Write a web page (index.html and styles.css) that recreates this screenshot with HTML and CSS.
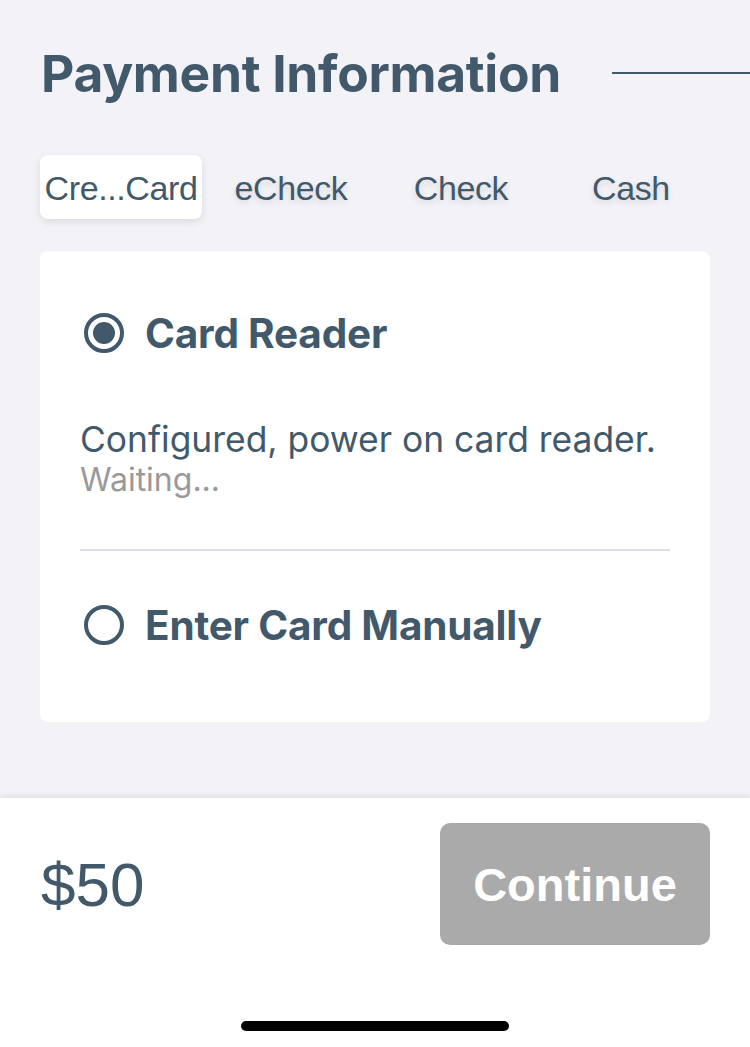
FILE: index.html
```html
<!DOCTYPE html>
<html>
<head>
<meta charset="utf-8">
<link rel="stylesheet" href="styles.css">
</head>
<body>
<div class="screen">
  <main class="main">
    <header class="header">
      <h1 class="title">Payment Information</h1>
      <div class="rule"></div>
    </header>
    <nav class="segments">
      <div class="segment selected">Cre...Card</div>
      <div class="segment">eCheck</div>
      <div class="segment">Check</div>
      <div class="segment">Cash</div>
    </nav>
    <section class="card">
      <div class="option">
        <span class="radio checked"></span>
        <span class="option-label">Card Reader</span>
      </div>
      <div class="status">
        <div class="status-main">Configured, power on card reader.</div>
        <div class="status-sub">Waiting...</div>
      </div>
      <div class="divider"></div>
      <div class="option option-second">
        <span class="radio"></span>
        <span class="option-label">Enter Card Manually</span>
      </div>
    </section>
  </main>
  <footer class="footer">
    <div class="footer-row">
      <div class="amount">$50</div>
      <button class="continue">Continue</button>
    </div>
    <div class="home-indicator"></div>
  </footer>
</div>
</body>
</html>
```
FILE: styles.css
```css
html, body {
  margin: 0;
  padding: 0;
}
body {
  background: #f2f2f7;
  font-family: "Inter", "Liberation Sans", sans-serif;
  color: #41596a;
}
.screen {
  width: 750px;
  height: 1047px;
  display: flex;
  flex-direction: column;
  overflow: hidden;
}
.main {
  height: 798px;
  flex: none;
}
.header {
  display: flex;
  align-items: center;
  padding-top: 40px;
  padding-left: 41px;
}
.title {
  margin: 0;
  font-size: 51.5px;
  font-weight: 700;
  line-height: 66px;
  letter-spacing: -0.3px;
  white-space: nowrap;
  color: #41596a;
}
.rule {
  flex: 1;
  height: 2px;
  background: #41596a;
  margin-left: 51px;
}
.segments {
  display: grid;
  grid-template-columns: repeat(4, 170px);
  margin: 49px 0 0 36px;
  height: 64px;
}
.segment {
  display: flex;
  align-items: center;
  justify-content: center;
  font-family: "Liberation Sans", Arial, sans-serif;
  font-size: 34px;
  letter-spacing: -0.4px;
  color: #41596a;
  text-shadow: 0 3px 6px rgba(0,0,0,0.12);
  padding-top: 2px;
  box-sizing: border-box;
}
.segment.selected {
  margin: 0 4px;
  background: #fff;
  border-radius: 8px;
  box-shadow: 0 3px 8px rgba(0,0,0,0.1);
  text-shadow: none;
}
.card {
  margin: 32px 40px 0 40px;
  background: #fff;
  border-radius: 8px;
  padding: 62px 40px 77px 40px;
}
.option {
  display: flex;
  align-items: center;
  height: 40px;
  padding-left: 4px;
}
.radio {
  width: 40px;
  height: 40px;
  box-sizing: border-box;
  border: 4px solid #41596a;
  border-radius: 50%;
  flex: none;
  display: flex;
  align-items: center;
  justify-content: center;
}
.radio.checked::after {
  content: "";
  width: 22px;
  height: 22px;
  border-radius: 50%;
  background: #41596a;
}
.option-label {
  margin-left: 21px;
  font-size: 40.5px;
  font-weight: 700;
  letter-spacing: -0.2px;
  white-space: nowrap;
}
.status {
  margin-top: 67px;
}
.status-main {
  font-size: 35.4px;
  line-height: 40px;
  white-space: nowrap;
}
.status-sub {
  font-size: 32px;
  line-height: 36px;
  margin-top: 2px;
  color: #999;
}
.divider {
  height: 2px;
  background: #dcdfe3;
  margin-top: 51px;
}
.option-second {
  margin-top: 54px;
}
.footer {
  flex: 1;
  background: #fff;
  box-shadow: 0 -2px 6px rgba(0,0,0,0.08);
  display: flex;
  flex-direction: column;
}
.footer-row {
  display: flex;
  align-items: center;
  justify-content: space-between;
  padding: 25px 40px 0 41px;
}
.amount {
  font-family: "Liberation Sans", Arial, sans-serif;
  font-size: 62px;
  color: #41596a;
}
.continue {
  width: 270px;
  height: 122px;
  border: none;
  border-radius: 10px;
  background: #aaaaaa;
  color: #fff;
  font-family: "Liberation Sans", Arial, sans-serif;
  font-weight: 700;
  font-size: 47px;
  padding: 0;
}
.home-indicator {
  width: 268px;
  height: 10px;
  border-radius: 5px;
  background: #000;
  margin: 76px auto 0 auto;
}
```
